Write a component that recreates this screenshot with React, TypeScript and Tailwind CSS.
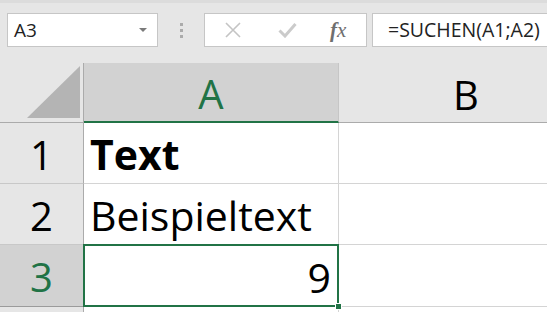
import React from "react";

const rows = [
  { n: 1, a: "Text", bold: true, right: false },
  { n: 2, a: "Beispieltext", bold: false, right: false },
  { n: 3, a: "9", bold: false, right: true },
];

export default function App() {
  return (
    <div
      className="relative h-[312px] w-[547px] overflow-hidden bg-white"
      style={{ fontFamily: '"Open Sans", "Noto Sans", sans-serif' }}
    >
      {/* Formula bar */}
      <div className="h-[3px] bg-[#dcdcdc]" />
      <div className="flex h-[60px] items-start bg-[#e6e6e6] pt-[10px] pl-[7px]">
        <div className="flex h-[34px] w-[151px] items-center border border-[#c6c6c6] bg-white pl-[6px] pr-[10px]">
          <span className="flex-1 text-[19px] text-[#222]">A3</span>
          <span className="h-0 w-0 border-x-[4px] border-t-[4px] border-x-transparent border-t-[#7a7a7a]" />
        </div>
        <div className="flex h-[34px] w-[46px] flex-col items-center justify-center gap-[3px]">
          <span className="h-[3px] w-[3px] bg-[#ababab]" />
          <span className="h-[3px] w-[3px] bg-[#ababab]" />
          <span className="h-[3px] w-[3px] bg-[#ababab]" />
        </div>
        <div className="flex h-[34px] w-[163px] items-center border border-[#c6c6c6] bg-white">
          <svg className="ml-[19px]" width="18" height="18" viewBox="0 0 18 18">
            <path d="M2 2 L16 16 M16 2 L2 16" stroke="#c4c4c4" strokeWidth="1.6" fill="none" />
          </svg>
          <svg className="ml-[36px]" width="19" height="16" viewBox="0 0 19 16">
            <path d="M1.5 8.5 L7 14 L17.5 2" stroke="#cbcbcb" strokeWidth="3" fill="none" />
          </svg>
          <span
            className="ml-[33px] text-[21px] italic leading-none text-[#6f6f6f]"
            style={{ fontFamily: '"Liberation Serif", "DejaVu Serif", serif' }}
          >
            <span className="font-bold">f</span>x
          </span>
        </div>
        <div className="ml-[5px] flex h-[34px] flex-1 items-center border border-r-0 border-[#c6c6c6] bg-white pl-[15px]">
          <span className="text-[19.5px] text-[#222]">=SUCHEN(A1;A2)</span>
        </div>
      </div>

      {/* Sheet grid */}
      <div className="grid grid-cols-[84px_255px_255px]">
        <div className="flex h-[60px] items-end justify-end border-r border-b border-[#ababab] bg-[#e6e6e6] pr-[3px] pb-[4px]">
          <svg width="53" height="52" viewBox="0 0 53 52">
            <path d="M0 52 L53 52 L53 0 Z" fill="#b4b4b4" />
          </svg>
        </div>
        <div className="flex h-[60px] items-center justify-center border-r border-b-2 border-r-[#c6c6c6] border-b-[#217346] bg-[#d2d2d2] pt-[4px] text-[40px] leading-none text-[#217346]">
          A
        </div>
        <div className="flex h-[60px] items-center justify-center border-r border-b border-r-[#c6c6c6] border-b-[#ababab] bg-[#e6e6e6] pt-[4px] text-[40px] leading-none text-black">
          B
        </div>

        {rows.map((r) => {
          const sel = r.n === 3;
          return (
            <React.Fragment key={r.n}>
              <div
                className={
                  sel
                    ? "flex h-[62px] items-center justify-center border-r border-b border-r-[#ababab] border-b-[#9b9b9b] bg-[#d2d2d2] pt-[3px] text-[40px] leading-none text-[#217346]"
                    : "flex h-[61px] items-center justify-center border-r border-b border-r-[#ababab] border-b-[#c8c8c8] bg-[#e6e6e6] pt-[3px] text-[40px] leading-none text-black"
                }
              >
                {r.n}
              </div>
              <div
                className={
                  "relative flex items-center border-r border-b border-[#d4d4d4] pt-[3px] text-[41px] leading-none text-black " +
                  (sel ? "h-[62px] justify-end pr-[7px]" : "h-[61px] pl-[6px]") +
                  (r.bold ? " font-bold" : "")
                }
              >
                {r.a}
                {sel && (
                  <>
                    <div className="absolute -top-px -right-px -bottom-px -left-px border-2 border-[#217346]" />
                    <div className="absolute -right-[4px] -bottom-[4px] h-[7px] w-[7px] border border-white bg-[#217346]" />
                  </>
                )}
              </div>
              <div className={"border-r border-b border-[#d4d4d4] " + (sel ? "h-[62px]" : "h-[61px]")} />
            </React.Fragment>
          );
        })}

        <div className="h-[20px] border-r border-[#ababab] bg-[#e6e6e6]" />
        <div className="h-[20px] border-r border-[#d4d4d4]" />
        <div className="h-[20px] border-r border-[#d4d4d4]" />
      </div>
    </div>
  );
}
